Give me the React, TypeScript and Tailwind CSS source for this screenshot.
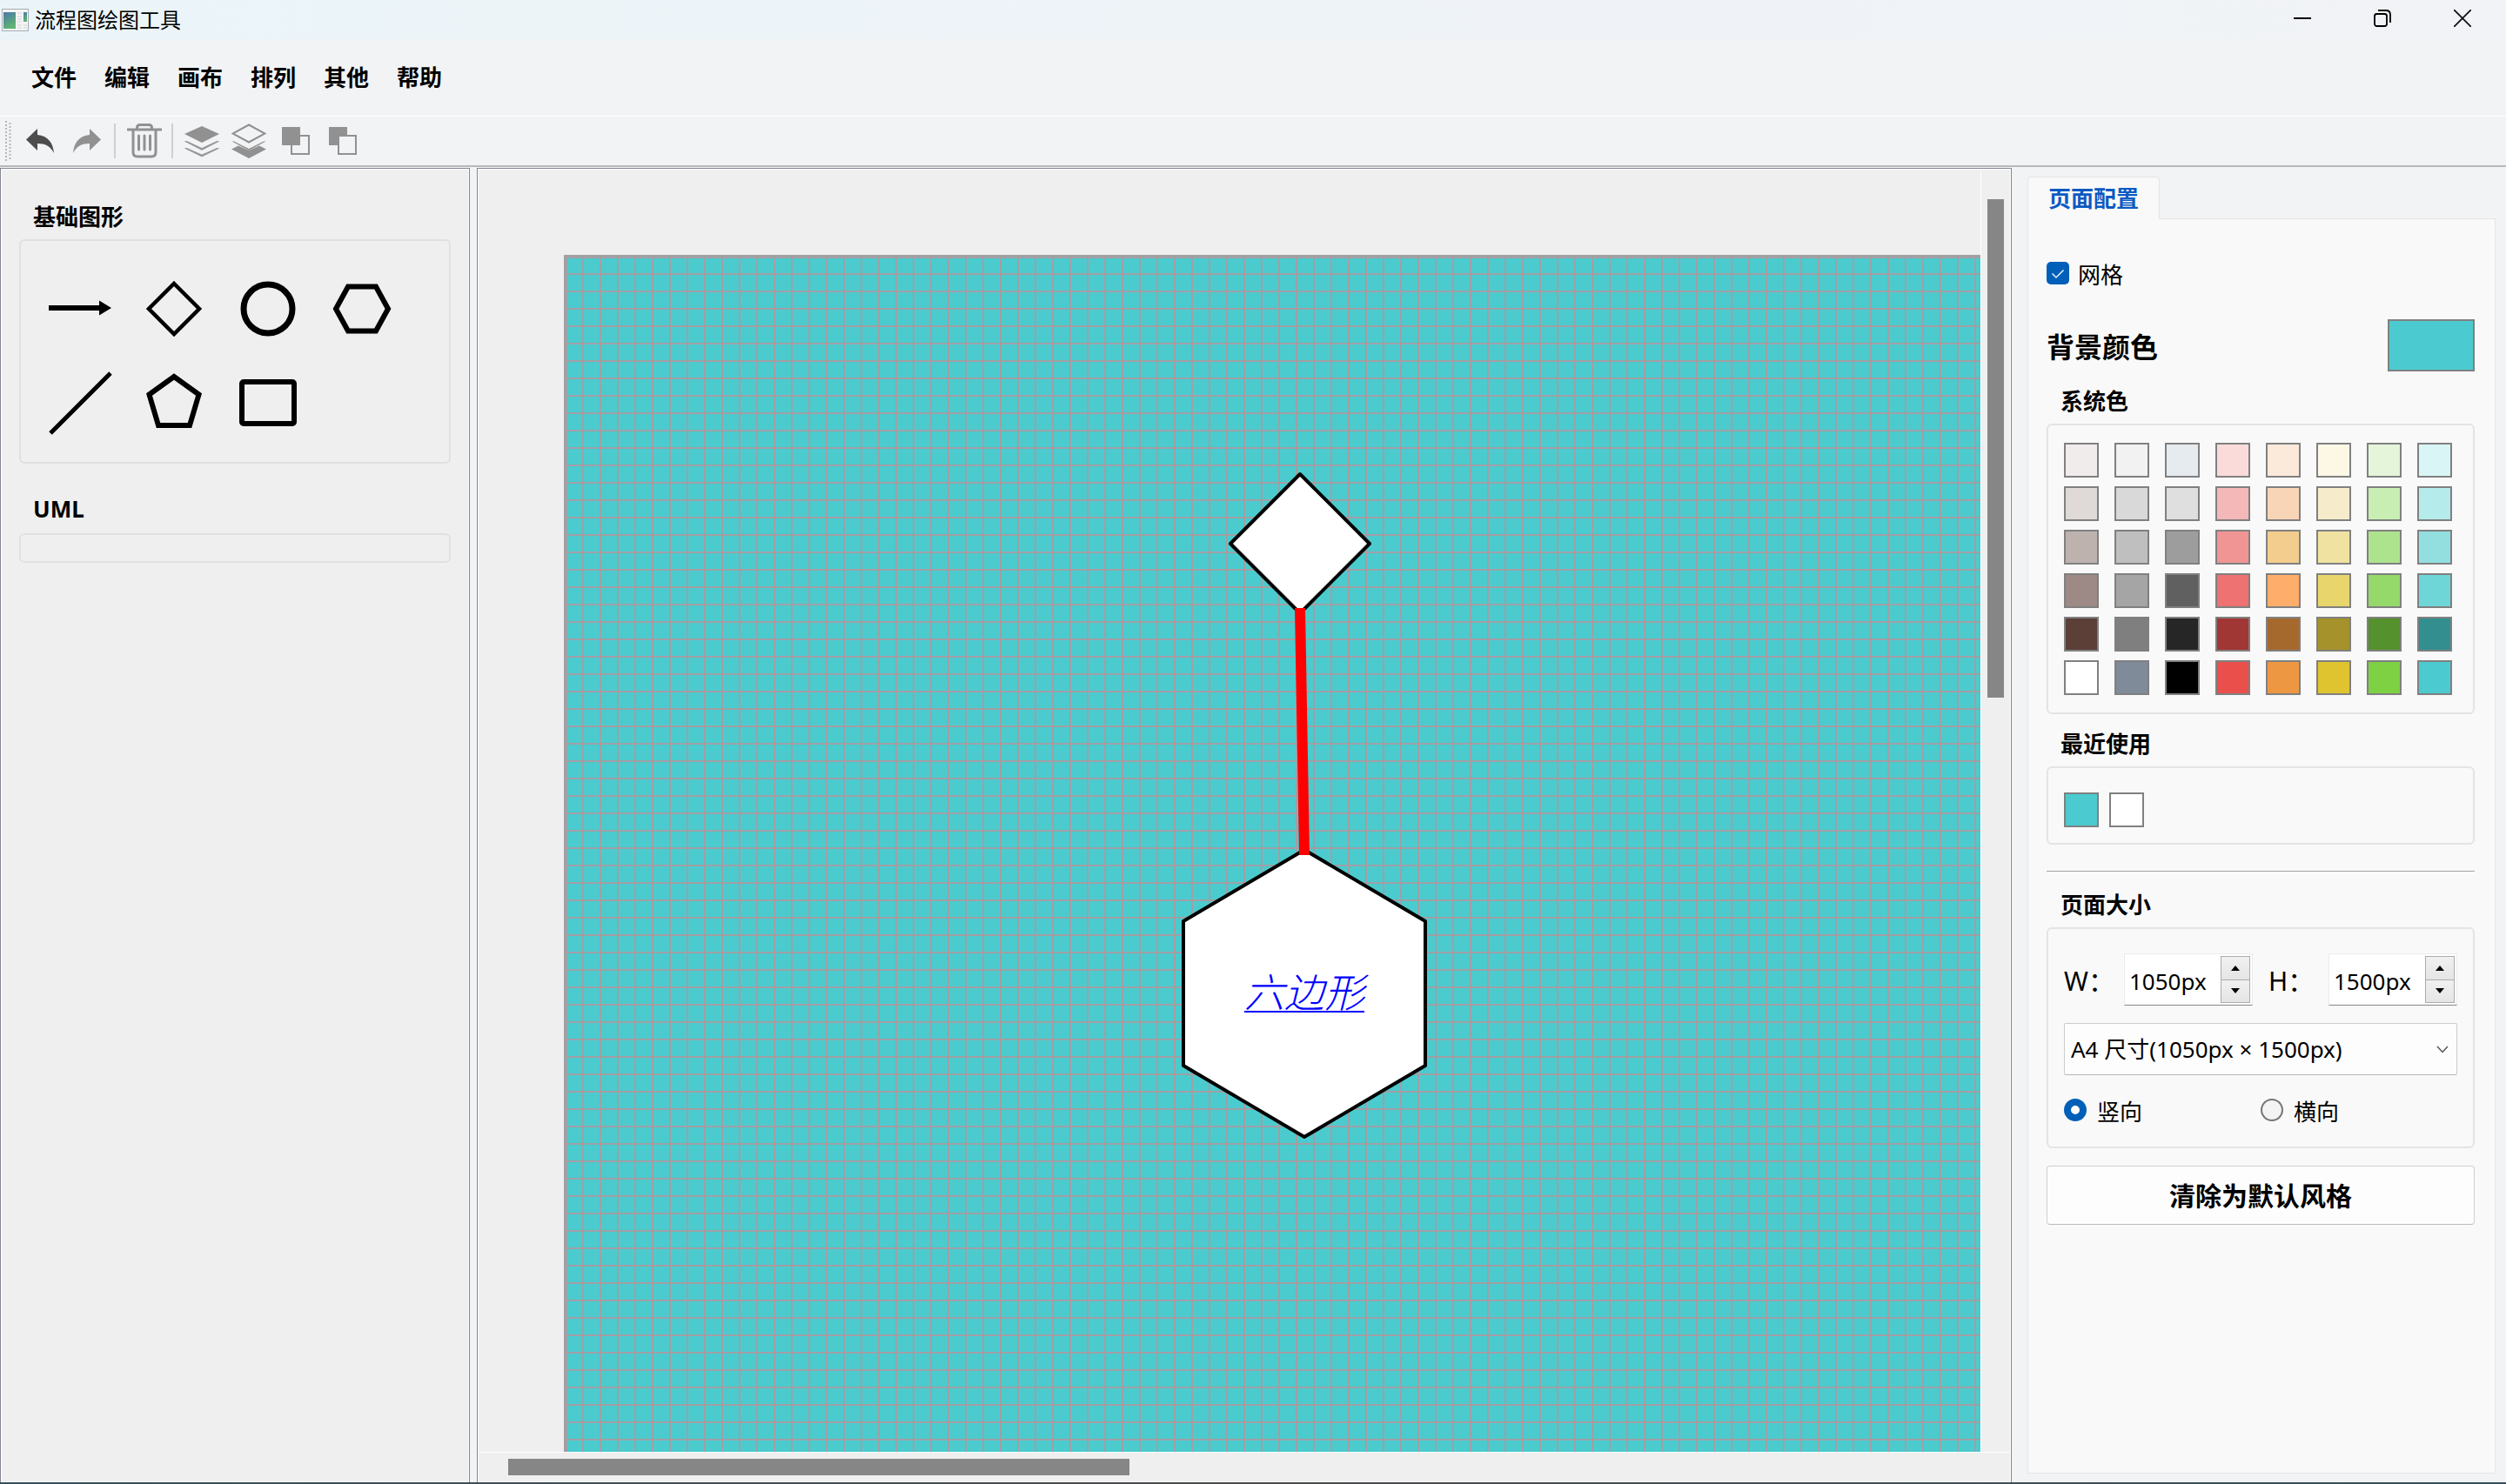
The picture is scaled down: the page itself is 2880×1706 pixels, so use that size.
import React, { useState } from 'react';

const menus = ['文件', '编辑', '画布', '排列', '其他', '帮助'];

const palette = [
  ['#f0ecec', '#f2f2f2', '#e6ebef', '#fadbda', '#fbe9da', '#fdf8e6', '#e5f5da', '#daf5f5'],
  ['#dfdad7', '#d9d9d9', '#dfdfdf', '#f5b8b8', '#f8d5b6', '#f6eccc', '#c9eeb4', '#b6ebeb'],
  ['#beb2af', '#bfbfbf', '#9d9d9d', '#f09594', '#f3cd8d', '#f0e3a1', '#aee38e', '#93dfe0'],
  ['#9d8a86', '#a5a5a5', '#606060', '#ed7271', '#ffad6a', '#e8d66d', '#94d96a', '#6fd6d8'],
  ['#5c4038', '#7f7f7f', '#262626', '#a13735', '#a5692e', '#a5922a', '#55912d', '#338e90'],
  ['#ffffff', '#808b99', '#000000', '#ea4f4c', '#ee9743', '#dfc42f', '#7dd143', '#4bcbcf'],
];

function AppIcon() {
  return (
    <svg width="31" height="26" viewBox="0 0 31 26" aria-hidden="true">
      <defs>
        <linearGradient id="ai" x1="0" y1="0" x2="0.4" y2="1">
          <stop offset="0" stopColor="#4a78a8" />
          <stop offset="1" stopColor="#5fb474" />
        </linearGradient>
      </defs>
      <rect x="0.5" y="0.5" width="30" height="25" fill="#f4f4f4" stroke="#a7adb3" />
      <rect x="2" y="4" width="14" height="19" fill="url(#ai)" />
      <path d="M18 5h5M18 9h5M18 12h5M18 15h5M18 19h5M18 22h5M25 19h4M25 22h4" stroke="#d3d5d7" />
      <rect x="25" y="4" width="4" height="11" fill="url(#ai)" />
    </svg>
  );
}

function ShapeIcon({ kind }: { kind: string }) {
  const s = { fill: 'none', stroke: '#000', strokeWidth: 6 };
  return (
    <svg width="76" height="76" viewBox="0 0 76 76" aria-hidden="true">
      {kind === '箭头' && (
        <>
          <path d="M2 37H62" {...s} />
          <path d="M60 28.500L74 37L60 45.500Z" />
        </>
      )}
      {kind === '菱形' && <path d="M38 9L67 38L38 67L9 38Z" {...s} strokeWidth={4.500} />}
      {kind === '圆形' && <circle cx="38" cy="38" r="28" {...s} strokeWidth={7} />}
      {kind === '六边形' && <path d="M22 12.500H54L68 38L54 63.500H22L8 38Z" {...s} />}
      {kind === '直线' && <path d="M4 73L73 4" {...s} strokeWidth={5} />}
      {kind === '五边形' && <path d="M38 8L66.500 28.500L56 64H20L9.500 28.500Z" {...s} />}
      {kind === '矩形' && <rect x="8" y="14" width="60" height="48" rx="2" {...s} strokeWidth={6} />}
    </svg>
  );
}

const iconButton = 'flex h-10 w-10 items-center justify-center';

function Toolbar() {
  return (
    <div className="flex h-[57px] items-center border-t border-white pl-[5px]">
      <svg width="8" height="46" aria-hidden="true">
        <path d="M2 0V46M6.500 2V46" stroke="#b4b6b8" strokeWidth="2" strokeDasharray="2 2" />
      </svg>
      <div className="ml-[13px] flex gap-[14px]">
        <button aria-label="撤销" className={iconButton}>
          <svg width="32" height="28" viewBox="0 0 32 28">
            <path d="M0 12.500L13 0V7C25 8 31 16 32 28C28 20 22 17 13 17V25Z" fill="#4d4d4d" />
          </svg>
        </button>
        <button aria-label="重做" className={iconButton}>
          <svg width="32" height="28" viewBox="0 0 32 28">
            <path d="M32 12.500L19 0V7C7 8 1 16 0 28C4 20 10 17 19 17V25Z" fill="#919191" />
          </svg>
        </button>
      </div>
      <div className="mx-[11px] h-10 w-0.5 bg-[#cfd0d2]" />
      <button aria-label="删除" className="mx-0.5 flex h-10 w-10 items-center justify-center">
        <svg width="40" height="40" viewBox="0 0 40 40" fill="none" stroke="#919191" strokeWidth="3">
          <path d="M0 7H40" />
          <path d="M11.500 7V5Q11.500 1.500 15 1.500H25Q28.500 1.500 28.500 5V7" />
          <path d="M7 7V33Q7 38 12 38H28Q33 38 33 33V7" />
          <path d="M13.500 14V30M20 14V30M26.500 14V30" strokeLinecap="round" />
        </svg>
      </button>
      <div className="mx-[9px] h-10 w-0.5 bg-[#cfd0d2]" />
      <div className="ml-1 flex gap-[14px]">
        <button aria-label="置于顶层" className={iconButton}>
          <svg width="40" height="40" viewBox="0 0 40 40">
            <path d="M20 3L40 12L20 22L0 12Z" fill="#919191" />
            <path d="M0.500 20.500H3L20 28.500L37 20.500H39.500L20 30.500ZM0.500 28.500H3L20 36L37 28.500H39.500L20 38Z" fill="#919191" stroke="#919191" strokeWidth="0.600" />
          </svg>
        </button>
        <button aria-label="置于底层" className={iconButton}>
          <svg width="40" height="40" viewBox="0 0 40 40">
            <path d="M20 1.500L38.500 11.500L20 21.500L1.500 11.500Z" fill="none" stroke="#919191" strokeWidth="2" />
            <path d="M0.500 20.500H3L20 29L37 20.500H39.500L20 31Z" fill="#919191" />
            <path d="M0 29.500L8 25.500L20 31L32 25.500L40 29.500L20 40Z" fill="#919191" />
          </svg>
        </button>
        <button aria-label="上移一层" className={iconButton}>
          <svg width="34" height="34" viewBox="0 0 34 34">
            <rect x="12" y="11" width="20" height="21" fill="#f1f3f5" stroke="#919191" strokeWidth="2" />
            <rect x="1" y="1" width="21" height="21" fill="#919191" />
          </svg>
        </button>
        <button aria-label="下移一层" className={iconButton}>
          <svg width="34" height="34" viewBox="0 0 34 34">
            <rect x="1" y="1" width="21" height="21" fill="#919191" />
            <rect x="12" y="11" width="20" height="21" fill="#f1f3f5" stroke="#919191" strokeWidth="2" />
          </svg>
        </button>
      </div>
    </div>
  );
}

function ShapeLibrary() {
  return (
    <aside className="flex w-[540px] shrink-0 flex-col border border-b-0 border-[#828790] bg-white p-px">
      <div className="flex-1 bg-[#efefef] px-5 pt-9">
        <h2 className="px-4 font-bold leading-9">基础图形</h2>
        <div className="mt-2 grid h-[258px] grid-cols-[repeat(4,108px)] content-start gap-y-8 rounded-md border-2 border-[#e0e0e0] pl-[14px] pt-10">
          {['箭头', '菱形', '圆形', '六边形', '直线', '五边形', '矩形'].map((k) => (
            <button key={k} aria-label={k} className="flex h-[76px] items-center justify-center">
              <ShapeIcon kind={k} />
            </button>
          ))}
        </div>
        <h2 className="mt-[34px] px-4 font-bold leading-9">UML</h2>
        <div className="mt-[10px] h-[34px] rounded-md border-2 border-[#e0e0e0]" />
      </div>
    </aside>
  );
}

function Canvas() {
  return (
    <main className="flex min-w-0 flex-1 flex-col border border-b-0 border-[#828790] bg-white p-px">
      <div className="flex min-h-0 flex-1 bg-[#efefef]">
        <div className="relative min-w-0 flex-1 overflow-hidden">
          <svg className="absolute inset-0 h-full w-full" aria-hidden="true">
            <defs>
              <pattern id="grid" x="100" y="100" width="20" height="20" patternUnits="userSpaceOnUse">
                <path d="M0 0H20M0 20H20M0 0V20M20 0V20" stroke="#a19fa4" strokeWidth="2" />
              </pattern>
            </defs>
            <rect x="100" y="100" width="2100" height="3000" fill="#4bcbce" />
            <rect x="100" y="100" width="2100" height="3000" fill="url(#grid)" />
            <rect x="100" y="100" width="2100" height="3000" fill="none" stroke="#a19fa4" strokeWidth="4" />
            <path d="M944 350L1024 430L944 510L864 430Z" fill="#fff" stroke="#000" strokeWidth="4" strokeLinejoin="round" />
            <path d="M949 782L1088 864V1030L949 1112L810 1030V864Z" fill="#fff" stroke="#000" strokeWidth="4" strokeLinejoin="round" />
            <path d="M938 504H950L955 788H943Z" fill="#f00" />
          </svg>
          <div className="absolute left-[810px] top-[782px] flex h-[330px] w-[278px] items-center justify-center">
            <span className="pb-1 text-[46px] font-light italic leading-[60px] text-[#0000ff] underline decoration-2 underline-offset-[4px]">六边形</span>
          </div>
        </div>
        <div className="flex w-[34px] shrink-0 flex-col border-l border-white pl-[7px] pt-[34px]">
          <div className="h-[573px] w-[19px] bg-[#868686]" />
        </div>
      </div>
      <div className="flex h-[34px] shrink-0 items-center border-t border-white bg-[#efefef] pl-[34px]">
        <div className="h-[19px] w-[714px] bg-[#868686]" />
      </div>
    </main>
  );
}

function SizeInput({ label, value }: { label: string; value: string }) {
  const [v, setV] = useState(value);
  const step = (n: number) => setV(`${parseInt(v, 10) + n}px`);
  const arrow = 'flex flex-1 items-center justify-center border border-[#acacac] bg-linear-to-b from-[#f0f0f0] to-[#e5e5e5]';
  return (
    <>
      <label htmlFor={label} className="flex-1 whitespace-nowrap pt-0.5 text-[30px]">
        {label}：
      </label>
      <div className="flex h-[60px] w-[148px] border border-[#ececec] border-b-[#868686] bg-white p-0.5">
        <input
          id={label}
          value={v}
          onChange={(e) => setV(e.target.value)}
          className="min-w-0 flex-1 bg-transparent pl-[3px] pt-1 outline-none"
        />
        <div className="flex w-[34px] flex-col">
          <button aria-label={`${label} 增加`} onClick={() => step(1)} className={arrow}>
            <svg width="10" height="6"><path d="M0 6L5 0L10 6Z" /></svg>
          </button>
          <button aria-label={`${label} 减少`} onClick={() => step(-1)} className={`${arrow} border-t-0`}>
            <svg width="10" height="6"><path d="M0 0L5 6L10 0Z" /></svg>
          </button>
        </div>
      </div>
    </>
  );
}

const groupBox = 'mt-2 rounded-md border-2 border-[#e4e4e4] px-[18px]';
const radio =
  'size-[26px] appearance-none rounded-full border-2 border-[#767676] bg-[#f3f3f3] checked:border-8 checked:border-[#005fb8] checked:bg-white';

function Settings() {
  const [bg, setBg] = useState('#4bcbcf');
  return (
    <aside className="flex w-[568px] shrink-0 flex-col pb-[10px] pl-[18px] pr-3 pt-[10px]">
      <div role="tablist" className="flex">
        <button
          role="tab"
          aria-selected="true"
          className="relative z-10 -mb-px h-[49px] w-[152px] rounded-t-sm border border-b-0 border-[#e5e5e5] bg-[#f9f9f9] font-bold leading-9 text-[#0b5ac2]"
        >
          页面配置
        </button>
      </div>
      <div className="flex-1 border border-[#e5e5e5] bg-[#f9f9f9] px-[23px] pl-[21px] pt-[42px]">
        <label className="flex items-center gap-[10px]">
          <span className="relative flex size-[26px]">
            <input type="checkbox" defaultChecked className="size-[26px] appearance-none rounded-[5px] border-2 border-[#767676] checked:border-0 checked:bg-[#005fb8]" />
            <svg className="pointer-events-none absolute inset-0" width="26" height="26" fill="none" stroke="#e6f0f8" strokeWidth="1.500">
              <path d="M6.500 13.500L11 18L19.500 9.500" />
            </svg>
          </span>
          <span className="pt-1 leading-9">网格</span>
        </label>

        <div className="mt-[33px] flex h-[60px] items-center justify-between">
          <h1 className="pt-1 text-[32px] font-bold">背景颜色</h1>
          <button aria-label="背景颜色" className="h-[60px] w-[100px] border-2 border-[#808080]" style={{ backgroundColor: bg }} />
        </div>

        <h2 className="mt-4 px-4 font-bold leading-9">系统色</h2>
        <div className={`${groupBox} grid grid-cols-[repeat(8,40px)] gap-x-[18px] gap-y-[10px] pb-5 pt-5`}>
          {palette.flat().map((c) => (
            <button key={c} aria-label={c} onClick={() => setBg(c)} className="size-10 border-2 border-[#808080]" style={{ backgroundColor: c }} />
          ))}
        </div>

        <h2 className="mt-4 px-4 font-bold leading-9">最近使用</h2>
        <div className={`${groupBox} flex gap-3 pb-[18px] pt-7`}>
          <button aria-label="最近使用 1" className="size-10 border-2 border-[#808080] bg-[#4bcbcf]" />
          <button aria-label="最近使用 2" className="size-10 border-2 border-[#808080] bg-white" />
        </div>

        <hr className="mt-[30px] h-[3px] border-0 border-t border-[#a0a0a0] bg-white" />

        <h2 className="mt-[18px] px-4 font-bold leading-9">页面大小</h2>
        <div className={`${groupBox} flex flex-col gap-5 pb-[22px] pt-7`}>
          <div className="flex items-center">
            <SizeInput label="W" value="1050px" />
            <div className="w-[18px]" />
            <SizeInput label="H" value="1500px" />
          </div>
          <div className="relative">
            <select aria-label="页面尺寸" className="h-[60px] w-full appearance-none rounded-xs border border-[#cccccc] border-b-[#b4b4b4] bg-[#fdfdfd] px-[7px]">
              <option>A4 尺寸(1050px × 1500px)</option>
            </select>
            <svg className="pointer-events-none absolute right-[10px] top-[26px]" width="14" height="9" fill="none" stroke="#555" strokeWidth="1.500">
              <path d="M1 1L7 7.500L13 1" />
            </svg>
          </div>
          <div className="grid grid-cols-2">
            {['竖向', '横向'].map((t, i) => (
              <label key={t} className="flex items-center gap-3 leading-9">
                <input type="radio" name="orientation" defaultChecked={i === 0} className={radio} />
                <span className="pt-1">{t}</span>
              </label>
            ))}
          </div>
        </div>

        <button className="mt-5 h-[68px] w-full rounded-sm border border-[#cfcfcf] border-b-[#bcbcbc] bg-[#fdfdfd] text-[30px] font-bold">
          清除为默认风格
        </button>
      </div>
    </aside>
  );
}

export default function App() {
  return (
    <div className="flex h-screen flex-col overflow-hidden bg-[#f1f3f5] font-['Noto_Sans','Noto_Sans_CJK_SC',sans-serif] text-[26px] text-black">
      <header className="flex h-[45px] shrink-0 items-center bg-linear-to-r from-[#ebf5f9] via-[#eef3f8] to-[#f1f3f6] pl-0.5">
        <AppIcon />
        <span className="ml-[7px] text-2xl leading-8">流程图绘图工具</span>
        <div className="ml-auto flex h-[42px] self-start pr-1">
          <button aria-label="最小化" className="flex w-[92px] items-center justify-center">
            <svg width="20" height="20"><path d="M0 10H20" stroke="#000" strokeWidth="2" /></svg>
          </button>
          <button aria-label="还原" className="flex w-[92px] items-center justify-center">
            <svg width="20" height="20" fill="none" stroke="#000" strokeWidth="1.800">
              <rect x="1" y="5" width="14" height="14" rx="2.500" />
              <path d="M5 1H14Q19 1 19 6V15" />
            </svg>
          </button>
          <button aria-label="关闭" className="flex w-[92px] items-center justify-center">
            <svg width="20" height="20"><path d="M0 0L20 20M20 0L0 20" stroke="#111" strokeWidth="1.800" /></svg>
          </button>
        </div>
      </header>
      <nav className="flex h-[88px] shrink-0 items-center gap-8 pl-9">
        {menus.map((m) => (
          <button key={m} className="font-bold leading-9">{m}</button>
        ))}
      </nav>
      <div className="shrink-0">
        <Toolbar />
      </div>
      <div className="h-0.5 shrink-0 bg-[#b7b9bb]" />
      <div className="flex min-h-0 flex-1 pt-px">
        <ShapeLibrary />
        <div className="w-2 shrink-0" />
        <Canvas />
        <Settings />
      </div>
      <div className="h-0.5 shrink-0 bg-linear-to-r from-[#34505c] via-[#4a4a4a] to-[#34505c]" />
    </div>
  );
}
